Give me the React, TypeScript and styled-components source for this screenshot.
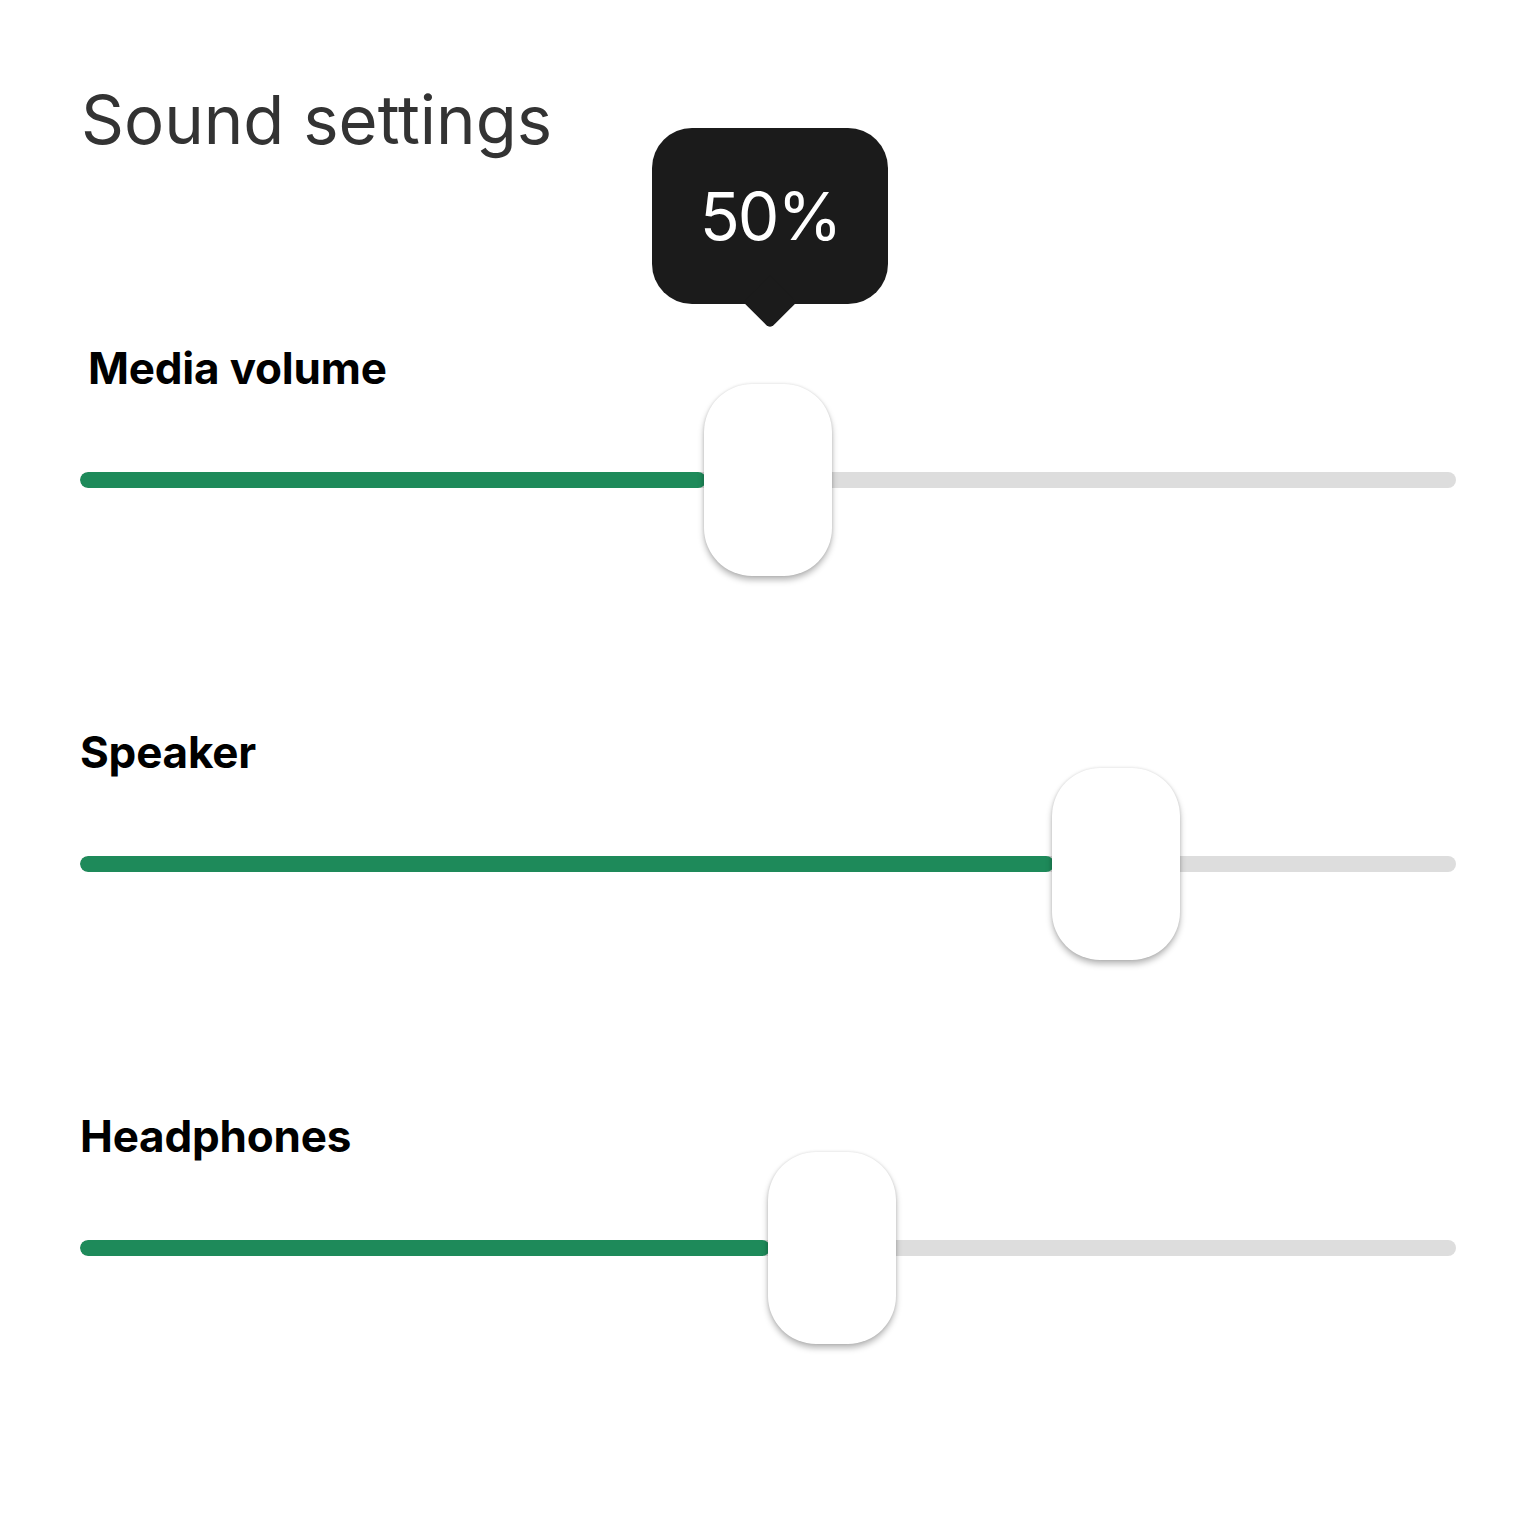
import React from 'react';
import styled, { createGlobalStyle } from 'styled-components';

const GlobalStyle = createGlobalStyle`
    html, body {
        margin: 0;
        padding: 0;
        background: #ffffff;
        font-family: Inter, "Noto Sans", sans-serif;
    }
`;

const Page = styled.div`
    width: 1536px;
    box-sizing: border-box;
    padding: 79px 80px 120px 80px;
    display: flex;
    flex-direction: column;
`;

const Title = styled.h1`
    margin: 0 0 181px 1px;
    font-size: 67px;
    font-weight: 400;
    color: #333333;
    line-height: normal;
`;

const SliderList = styled.div`
    display: flex;
    flex-direction: column;
    gap: 197px;
`;

const SliderRow = styled.div`
    display: flex;
    flex-direction: column;
    gap: 37px;
`;

const Label = styled.div<{ $indent?: number }>`
    padding-left: ${p => p.$indent || 0}px;
    font-size: 44px;
    font-weight: 700;
    letter-spacing: -0.2px;
    color: #000000;
    line-height: normal;
`;

const TrackArea = styled.div`
    position: relative;
    height: 96px;
    display: flex;
    align-items: center;
`;

const Rail = styled.div`
    position: relative;
    width: 100%;
    height: 16px;
    border-radius: 8px;
    background: #dddddd;
    overflow: hidden;
`;

const Fill = styled.div`
    height: 100%;
    border-radius: 8px;
    background: #1e8a5a;
`;

const Thumb = styled.div`
    position: absolute;
    top: 50%;
    width: 128px;
    height: 192px;
    margin-top: -96px;
    box-sizing: border-box;
    border-radius: 48px;
    background: #ffffff;
    box-shadow: 0 4px 6px rgba(0, 0, 0, 0.28), 0 0 3px rgba(0, 0, 0, 0.12);
`;

const Tooltip = styled.div`
    position: absolute;
    left: 50%;
    bottom: calc(100% + 80px);
    transform: translateX(calc(-50% + 2px));
    width: 236px;
    height: 176px;
    border-radius: 40px;
    background: #1b1b1b;
    color: #ffffff;
    font-size: 66px;
    font-weight: 400;
    letter-spacing: -2px;
    display: flex;
    align-items: center;
    justify-content: center;

    &::after {
        content: "";
        position: absolute;
        left: 50%;
        bottom: -17px;
        width: 38px;
        height: 38px;
        margin-left: -19px;
        background: #1b1b1b;
        border-radius: 0 0 5px 0;
        transform: rotate(45deg);
    }
`;

type SliderProps = {
    label: string;
    value: number; // 0..1 of travel
    indent?: number;
    tooltip?: string;
};

const Slider: React.FC<SliderProps> = ({ label, value, indent, tooltip }) => {
    const pos = `calc((100% - 128px) * ${value})`;
    return (
        <SliderRow>
            <Label $indent={indent}>{label}</Label>
            <TrackArea>
                <Rail>
                    <Fill style={{ width: `calc((100% - 128px) * ${value} + 2px)` }} />
                </Rail>
                <Thumb style={{ left: pos }}>
                    {tooltip && <Tooltip>{tooltip}</Tooltip>}
                </Thumb>
            </TrackArea>
        </SliderRow>
    );
};

const App: React.FC = () => {
    return (
        <>
            <GlobalStyle />
            <Page>
                <Title>Sound settings</Title>
                <SliderList>
                    <Slider label="Media volume" value={0.5} indent={8} tooltip="50%" />
                    <Slider label="Speaker" value={0.7788} />
                    <Slider label="Headphones" value={0.5513} />
                </SliderList>
            </Page>
        </>
    );
};

export default App;
